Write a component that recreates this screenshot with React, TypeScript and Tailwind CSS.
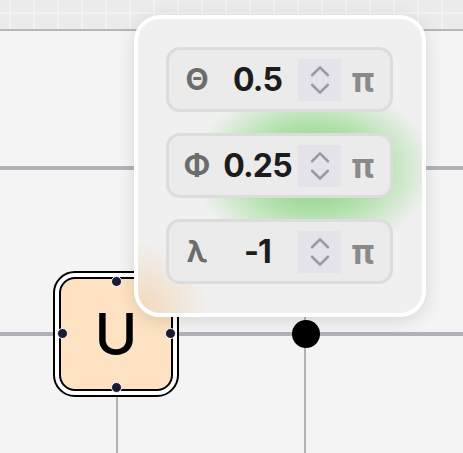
import { ChevronsUpDown } from 'lucide-react';

const PARAMS = [
  { symbol: 'Θ', value: '0.5' },
  { symbol: 'Φ', value: '0.25' },
  { symbol: 'λ', value: '-1' },
];

function ParamRow({ symbol, value }: { symbol: string; value: string }) {
  return (
    <div className="flex h-[65px] w-[227px] items-center rounded-[14px] border-[3px] border-[#dcdcdc] bg-[#ebebeb] pl-[8px]">
      <div className="w-[40px] text-center text-[30px] font-bold text-[#6c6c6c]">{symbol}</div>
      <div className="w-[81px] text-center text-[32px] font-bold tracking-tight text-[#1c1c1c]">{value}</div>
      <div className="flex h-[42px] w-[43px] items-center justify-center rounded-[2px] bg-[#e3e3e9] text-[#9898a8]">
        <ChevronsUpDown size={38} strokeWidth={1.6} />
      </div>
      <div className="w-[44px] text-center text-[35px] font-bold leading-none text-[#8a8a8a]">π</div>
    </div>
  );
}

export default function App() {
  return (
    <div className="relative h-[453px] w-[463px] overflow-hidden bg-[#f4f4f4] font-['Inter',sans-serif]">
      {/* top grid strip */}
      <div className="h-[31px] border-b-2 border-[#b6b6bb] bg-[#ebebeb] bg-[image:linear-gradient(to_right,#f2f2f2_2px,transparent_2px),linear-gradient(to_bottom,#f2f2f2_2px,transparent_2px)] bg-[size:24px_24px] bg-[position:9px_12px]" />

      {/* wires */}
      <div className="absolute left-0 right-0 top-[166px] h-[4px] bg-[#b1b1b8]" />
      <div className="absolute left-0 right-0 top-[332px] h-[4px] bg-[#b1b1b8]" />
      <div className="absolute bottom-0 left-[304px] top-[168px] w-[2px] bg-[#b1b1b8]" />
      <div className="absolute bottom-0 left-[116px] top-[390px] w-[2px] bg-[#b1b1b8]" />

      {/* control dot */}
      <div className="absolute left-[292px] top-[320px] h-[28px] w-[28px] rounded-full bg-black" />

      {/* selected U gate */}
      <div className="absolute left-[53px] top-[271px] h-[126px] w-[126px] rounded-[22px] border-[2.5px] border-black bg-white p-[4px]">
        <div className="flex h-full w-full items-center justify-center rounded-[16px] border-[2.5px] border-black bg-[#fde3c3]">
          <span className="text-[58px] font-medium leading-none text-black">U</span>
        </div>
        <div className="absolute left-[56px] top-[3px] h-[11px] w-[11px] rounded-full border-[1.5px] border-white bg-[#1c1a33]" />
        <div className="absolute left-[56px] top-[109px] h-[11px] w-[11px] rounded-full border-[1.5px] border-white bg-[#1c1a33]" />
        <div className="absolute left-[2px] top-[55px] h-[11px] w-[11px] rounded-full border-[1.5px] border-white bg-[#1c1a33]" />
        <div className="absolute left-[110px] top-[55px] h-[11px] w-[11px] rounded-full border-[1.5px] border-white bg-[#1c1a33]" />
      </div>

      {/* parameter popover */}
      <div className="absolute left-[134px] top-[15px] flex h-[302px] w-[292px] flex-col gap-[21px] rounded-[26px] border-4 border-white bg-[#f0f0f0] bg-[image:radial-gradient(ellipse_120px_85px_at_176px_150px,rgba(115,208,105,1),rgba(140,215,130,0.6)_55%,rgba(140,215,130,0)),radial-gradient(circle_at_0%_100%,rgba(244,212,178,0.9),rgba(244,212,178,0)_72px)] px-[28px] pt-[28px] shadow-[0_4px_18px_rgba(0,0,0,0.12)]">
        {PARAMS.map(p => (
          <ParamRow key={p.symbol} symbol={p.symbol} value={p.value} />
        ))}
      </div>
    </div>
  );
}
